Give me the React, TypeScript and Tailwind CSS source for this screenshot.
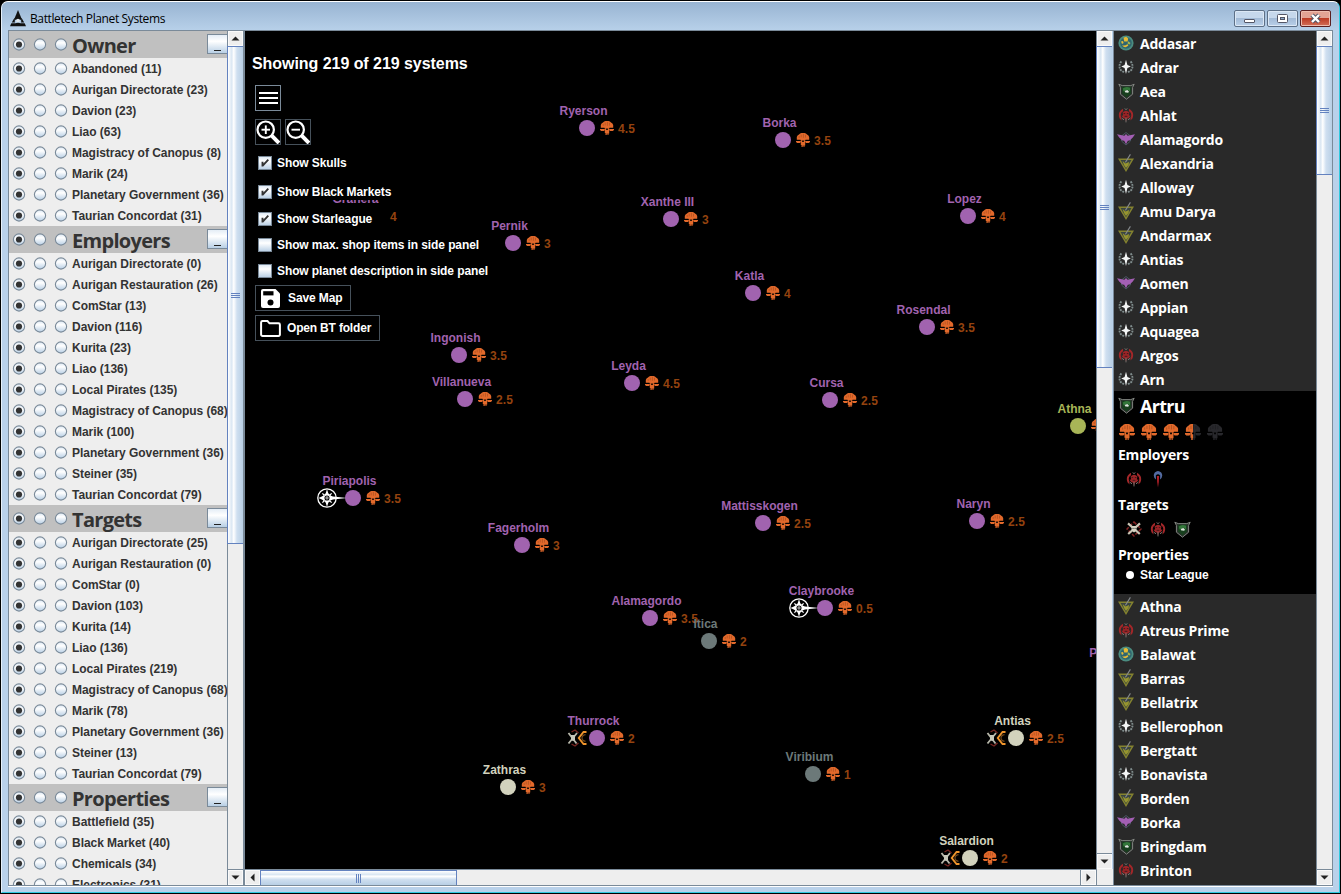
import React from "react";

type Faction = "abandoned" | "planetary" | "taurian" | "liao" | "canopus" | "restoration" | "marik" | "pirates";

type Entry = [string, number];

const owner: Entry[] = [
  ["Abandoned", 11], ["Aurigan Directorate", 23], ["Davion", 23], ["Liao", 63],
  ["Magistracy of Canopus", 8], ["Marik", 24], ["Planetary Government", 36], ["Taurian Concordat", 31],
];
const employers: Entry[] = [
  ["Aurigan Directorate", 0], ["Aurigan Restauration", 26], ["ComStar", 13], ["Davion", 116],
  ["Kurita", 23], ["Liao", 136], ["Local Pirates", 135], ["Magistracy of Canopus", 68],
  ["Marik", 100], ["Planetary Government", 36], ["Steiner", 35], ["Taurian Concordat", 79],
];
const targets: Entry[] = [
  ["Aurigan Directorate", 25], ["Aurigan Restauration", 0], ["ComStar", 0], ["Davion", 103],
  ["Kurita", 14], ["Liao", 136], ["Local Pirates", 219], ["Magistracy of Canopus", 68],
  ["Marik", 78], ["Planetary Government", 36], ["Steiner", 13], ["Taurian Concordat", 79],
];
const properties: Entry[] = [["Battlefield", 35], ["Black Market", 40], ["Chemicals", 34], ["Electronics", 31]];

const groups: { title: string; rows: Entry[] }[] = [
  { title: "Owner", rows: owner },
  { title: "Employers", rows: employers },
  { title: "Targets", rows: targets },
  { title: "Properties", rows: properties },
];

const before: [string, Faction][] = [
  ["Addasar", "abandoned"], ["Adrar", "planetary"], ["Aea", "taurian"], ["Ahlat", "liao"],
  ["Alamagordo", "canopus"], ["Alexandria", "restoration"], ["Alloway", "planetary"], ["Amu Darya", "restoration"],
  ["Andarmax", "restoration"], ["Antias", "planetary"], ["Aomen", "canopus"], ["Appian", "planetary"],
  ["Aquagea", "planetary"], ["Argos", "liao"], ["Arn", "planetary"],
];
const after: [string, Faction][] = [
  ["Athna", "restoration"], ["Atreus Prime", "liao"], ["Balawat", "abandoned"], ["Barras", "restoration"],
  ["Bellatrix", "restoration"], ["Bellerophon", "planetary"], ["Bergtatt", "restoration"], ["Bonavista", "planetary"],
  ["Borden", "restoration"], ["Borka", "canopus"], ["Bringdam", "taurian"], ["Brinton", "liao"],
];

interface System {
  name: string;
  x: number;
  y: number;
  skulls: string;
  color?: string;
  extra?: "star" | "market";
}

const PURPLE = "#a163af";
const GRAY = "#6c7979";
const CREAM = "#d2d2bd";

const systems: System[] = [
  { name: "Ryerson", x: 587, y: 128, skulls: "4.5" },
  { name: "Borka", x: 783, y: 140, skulls: "3.5" },
  { name: "Granera", x: 359, y: 216, skulls: "4" },
  { name: "Pernik", x: 513, y: 243, skulls: "3" },
  { name: "Xanthe III", x: 671, y: 219, skulls: "3" },
  { name: "Lopez", x: 968, y: 216, skulls: "4" },
  { name: "Katla", x: 753, y: 293, skulls: "4" },
  { name: "Rosendal", x: 927, y: 327, skulls: "3.5" },
  { name: "Ingonish", x: 459, y: 355, skulls: "3.5" },
  { name: "Villanueva", x: 465, y: 399, skulls: "2.5" },
  { name: "Leyda", x: 632, y: 383, skulls: "4.5" },
  { name: "Cursa", x: 830, y: 400, skulls: "2.5" },
  { name: "Athna", x: 1078, y: 426, skulls: "3", color: "#a8b557" },
  { name: "Piriapolis", x: 353, y: 498, skulls: "3.5", extra: "star" },
  { name: "Fagerholm", x: 522, y: 545, skulls: "3" },
  { name: "Mattisskogen", x: 763, y: 523, skulls: "2.5" },
  { name: "Naryn", x: 977, y: 521, skulls: "2.5" },
  { name: "Alamagordo", x: 650, y: 618, skulls: "3.5" },
  { name: "Claybrooke", x: 825, y: 608, skulls: "0.5", extra: "star" },
  { name: "Itica", x: 709, y: 641, skulls: "2", color: GRAY },
  { name: "Portland", x: 1117, y: 670, skulls: "2" },
  { name: "Thurrock", x: 597, y: 738, skulls: "2", extra: "market" },
  { name: "Antias", x: 1016, y: 738, skulls: "2.5", color: CREAM, extra: "market" },
  { name: "Zathras", x: 508, y: 787, skulls: "3", color: CREAM },
  { name: "Viribium", x: 813, y: 774, skulls: "1", color: GRAY },
  { name: "Salardion", x: 970, y: 858, skulls: "2", color: CREAM, extra: "market" },
];

function SkullShape() {
  return (
    <>
      <path d="M.8 6.8V4Q1.2 2.4 3 1.6Q4 0 5.5 0H8.5Q10 0 11 1.6Q12.8 2.4 13.2 4V6.8H9.6L9 7.4H5L4.4 6.8Z" />
      <path d="M0 7.9H4.8V9.2L3.8 10H1.2L0 9ZM9.2 7.9H14V9L12.8 10H10.2L9.2 9.2Z" />
      <path d="M4.8 7.2H6.2V9H7.8V7.2H9.2V12.4H8.5V13.9H7.5V12.4H6.7V14H5.5V12H4.8Z" />
      <path d="M5.2 1.6V4.4M7.4 .8V4.8M9.5 1.8V4.6M3.2 3V5" stroke="#000" strokeOpacity=".25" strokeWidth=".7" fill="none" />
    </>
  );
}

function Skull({ size = 14, level = 1 }: { size?: number; level?: number }) {
  return (
    <svg width={size} height={size} viewBox="0 0 14 14" className="block shrink-0">
      <g fill={level === 1 ? "#e2692b" : "#28282c"}>
        <SkullShape />
      </g>
      {level === 0.5 && (
        <svg width="7" height="14" viewBox="0 0 7 14">
          <g fill="#e2692b">
            <SkullShape />
          </g>
        </svg>
      )}
    </svg>
  );
}

function Emblem({ kind }: { kind: Faction | "steiner" }) {
  switch (kind) {
    case "abandoned":
      return (
        <svg width="16" height="16" viewBox="0 0 16 16" className="block">
          <circle cx="8" cy="8" r="7.6" fill="#4b8c80" />
          <circle cx="8" cy="8" r="5.8" fill="#2f6670" />
          <path d="M5.5 2.8 8.2 1.8 10.2 3.6 9.6 6.6 6.2 6.4ZM3 6.4 5 6 5.6 8 4 9ZM4 10.3C6 13 9 12.6 10.4 10L9.4 9.2Q7 11 4 10.3Z" fill="#e6bb35" />
          <path d="M10 6.3 12.6 8 11.4 9.6 9.6 8.4Z" fill="#a9b64a" />
        </svg>
      );
    case "planetary":
      return (
        <svg width="16" height="16" viewBox="0 0 16 16" className="block">
          <path d="M8 .8 9.4 6 12.8 7.5 9.4 9 8 15 6.6 9 3.2 7.5 6.6 6Z" fill="#f4f6f6" />
          <path d="M3.4 2.4Q-.2 7 3 11.4L6 13.2M12.6 2.4Q16.2 7 13 11.4L10 13.2" stroke="#7f8c8c" strokeWidth="1.9" strokeDasharray="1.9 .9" fill="none" />
        </svg>
      );
    case "taurian":
      return (
        <svg width="17" height="17" viewBox="0 0 17 17" className="block">
          <path d="M.8 1.2 4.2 2.6H12.8L16.2 1.2 14.6 4.4V11.2L8.5 16.2 2.4 11.2V4.4Z" fill="#2a312c" stroke="#8b8e8a" strokeWidth=".9" />
          <path d="M4 3.8H13V10.6L8.5 14.5 4 10.6Z" fill="#173f1d" />
          <path d="M4.8 5.6Q8 2.8 12 4.8V8.4L9.5 6.8 5.5 8.4Z" fill="#33773a" />
          <path d="M6.6 8 9.4 7 11.2 9 9.6 9.8 8.4 9.6 7.4 9.4Z" fill="#dce5dc" />
        </svg>
      );
    case "liao":
      return (
        <svg width="16" height="16" viewBox="0 0 16 16" className="block">
          <path d="M5 1.8Q-1 5 1.6 11.6L3.6 13.4 3 9.5Q2 6 5 4.2ZM11 1.8Q17 5 14.4 11.6L12.4 13.4 13 9.5Q14 6 11 4.2Z" fill="#a32729" />
          <path d="M4.6 5.4Q8 2.2 11.4 5.4L10.8 8.6 12.6 8.8 10.4 11.6H9L8 14.6 7 11.6H5.6L3.4 8.8 5.2 8.6Z" fill="#9c2427" />
          <path d="M6.8 1.4 8 2.8 9.2 1.4M8 10.8V15.4M3.6 11 6 12.9M12.4 11 10 12.9" stroke="#75726f" strokeWidth="1" fill="none" />
          <path d="M5.6 6.6H7.2M8.8 6.6H10.4M6.6 9.3H9.4" stroke="#37191a" strokeWidth=".9" />
        </svg>
      );
    case "canopus":
      return (
        <svg width="18" height="16" viewBox="0 0 18 16" className="block">
          <path d="M4.5 5 9 1.5 13.5 5V10L9 14 4.5 10Z" fill="none" stroke="#4a5663" strokeWidth="1" />
          <path d="M0 3.2 7.4 4.8 9 3 10.6 4.8 18 3.2 15.8 6.6 12.6 9.4 10.8 9.8 9 13.2 7.2 9.8 5.4 9.4 2.2 6.6Z" fill="#a35fb4" />
        </svg>
      );
    case "restoration":
      return (
        <svg width="16" height="18" viewBox="0 0 16 18" className="block">
          <path d="M1.2 5.2H14.8L8 16.6Z" fill="#3a4440" stroke="#85832f" strokeWidth="1.4" />
          <path d="M4.6 7 7.6 9.6 11 8 10.6 11 8 14 6 11Z" fill="#96952f" />
          <path d="M7.4 8.4 12.4 .4" stroke="#85898c" strokeWidth="1.1" />
        </svg>
      );
    case "steiner":
      return (
        <svg width="16" height="18" viewBox="0 0 16 18" className="block">
          <path d="M6 9.5Q2.2 6 4.8 2.6Q8 -.6 11.2 2.6Q13.8 6 10 9.5L10.2 5.6Q8 3 5.8 5.6Z" fill="#536ba1" />
          <path d="M6.9 6H9.1L8.8 12 8 17.4 7.2 12Z" fill="#b41f28" />
        </svg>
      );
    default:
      return (
        <svg width="16" height="16" viewBox="0 0 16 16" className="block">
          <path d="M8 1 15 8 8 15 1 8Z" fill="none" stroke="#842323" strokeWidth="1.5" strokeDasharray="3.4 1.4" />
          <path d="M2 2.4 13.8 13M14 2.4 2.2 13" stroke="#c9c4b4" strokeWidth="2.2" />
          <path d="M5.6 5H10.4V9.5L8 11.4 5.6 9.5Z" fill="#d7d3c3" />
          <path d="M6.6 7.4H7.5M8.6 7.4H9.5" stroke="#222" />
        </svg>
      );
  }
}

function Radio({ on = false }: { on?: boolean }) {
  return (
    <svg width="13" height="13" viewBox="0 0 13 13" className="block shrink-0 overflow-visible">
      <circle cx="7" cy="6.5" r="5.6" fill="url(#ball)" stroke="#7a8a99" strokeWidth="1.1" />
      {on && <circle cx="7" cy="6.5" r="3.1" fill="#333" />}
    </svg>
  );
}

function Radios() {
  return (
    <div className="flex gap-2">
      <Radio on />
      <Radio />
      <Radio />
    </div>
  );
}

function ArrowButton({ dir }: { dir: "up" | "down" | "left" | "right" }) {
  const paths = {
    up: "M3.5 9.5 7.5 5.5 11.5 9.5Z",
    down: "M3.5 5.5 7.5 9.5 11.5 5.5Z",
    left: "M9.5 3.5 5.5 7.5 9.5 11.5Z",
    right: "M5.5 3.5 9.5 7.5 5.5 11.5Z",
  };
  return (
    <div className="flex size-[15px] shrink-0 items-center justify-center border border-[#fafafa] bg-[#eee]">
      <svg width="15" height="15" viewBox="0 0 15 15" className="shrink-0">
        <path d={paths[dir]} fill="#222" />
      </svg>
    </div>
  );
}

function VBar({ thumb }: { thumb: string }) {
  return (
    <div className="flex w-4 shrink-0 flex-col border-l border-[#7a8a99] bg-[#eee]">
      <ArrowButton dir="up" />
      <div
        className={`-ml-px flex flex-col items-center justify-center gap-px border-y border-l border-[#6382bf] bg-[linear-gradient(90deg,#fff_0,#dbe7f3_25%,#fff_38%,#cfdff0_60%,#b8cfe5)] ${thumb}`}
      >
        <i className="block h-px w-[9px] bg-[#6382bf]" />
        <i className="block h-px w-[9px] bg-[#6382bf]" />
        <i className="block h-px w-[9px] bg-[#6382bf]" />
      </div>
      <div className="flex-1" />
      <div className="border-t border-[#7a8a99]">
        <ArrowButton dir="down" />
      </div>
    </div>
  );
}

function Group({ title, rows }: { title: string; rows: Entry[] }) {
  return (
    <section>
      <div className="flex h-[27px] items-center bg-[#c0c0c0] pl-[3px]">
        <div className="pb-px">
          <Radios />
        </div>
        <h2 className="ml-[5px] flex-1 pt-[3px] font-['Open_Sans',sans-serif] text-[20px] leading-[22px] font-bold tracking-[-0.7px]">{title}</h2>
        <button className="mb-[1px] flex h-5 w-5 items-end justify-center border border-r-0 border-[#7a8a99] bg-[linear-gradient(#e4edf6,#fff_35%,#b8cfe5)] pb-[2px]">
          <span className="block h-px w-[7px] bg-[#222]" />
        </button>
      </div>
      {rows.map(([name, count]) => (
        <div key={name} className="flex h-[21px] items-center pl-[3px]">
          <div className="pb-px">
            <Radios />
          </div>
          <span className="ml-[5px] pt-[2px] text-[12px] leading-[19px] font-bold tracking-[-0.04px] whitespace-nowrap">
            {name} ({count})
          </span>
        </div>
      ))}
    </section>
  );
}

function Node({ s }: { s: System }) {
  const color = s.color ?? PURPLE;
  return (
    <div className="absolute size-0" style={{ left: s.x - 245, top: s.y - 31 }}>
      <svg width="62" height="24" viewBox="-36 -12 62 24" className="absolute -top-3 -left-9">
        {s.extra === "star" && (
          <g>
            <circle cx="-26" cy="0" r="9.2" fill="none" stroke="#fff" strokeWidth="1.3" />
            <path d="M-26 -9 -24.2 -3 -20 -1.4 -6 0 -20 1.4 -24.2 3 -26 9 -27.8 3 -34.5 0 -27.8 -3Z" fill="#fff" />
            <circle cx="-26" cy="0" r="4" fill="none" stroke="#fff" strokeWidth="1.3" strokeDasharray="2.2 .94" />
            <path d="M-30.6 -4.6 -28.6 -2.6M-21.4 -4.6 -23.4 -2.6M-30.6 4.6 -28.6 2.6M-21.4 4.6 -23.4 2.6" stroke="#fff" strokeWidth="1.3" />
            <circle cx="-26" cy="0" r="2" fill="#fff" stroke="#000" strokeWidth="1.1" />
            <circle cx="-26" cy="0" r=".8" fill="#000" />
          </g>
        )}
        {s.extra === "market" && (
          <g>
            <path d="M-25.5 -6 -22 -8 -18.5 -5M-25.5 6 -22 8 -18.5 5" stroke="#762420" strokeWidth="1.4" fill="none" />
            <path d="M-28.5 -5 -20.5 5.5M-20 -5 -28.5 5.5" stroke="#b8b8ab" strokeWidth="1.8" />
            <path d="M-26 -3H-22V2L-24 3-26 2Z" fill="#c7c7ba" />
            <path d="M-10.5 -6H-13.5L-18.2 0-13.5 6H-10.5" fill="none" stroke="#ee942c" strokeWidth="1.9" />
            <path d="M-11.5 -3.3Q-15 -2.8-15 0T-11.5 3.3" fill="none" stroke="#754b1d" strokeWidth="1.2" />
          </g>
        )}
        <circle cx="0" cy="0" r="8" fill={color} />
      </svg>
      <div className="absolute top-[-7px] left-[13px]">
        <Skull />
      </div>
      <span className="absolute top-[-7px] left-[31px] text-[12px] leading-4 tracking-[0.1px] text-[#94430f]">
        {s.skulls}
      </span>
      <div className="absolute top-[-25px] left-[-64px] w-[121px] text-center text-[12px] leading-4 whitespace-nowrap" style={{ color }}>
        {s.name}
      </div>
    </div>
  );
}

function Check({ label, on = false, h }: { label: string; on?: boolean; h: string }) {
  return (
    <label className={`flex w-fit items-center gap-[5px] bg-black pl-1 text-[12px] font-bold tracking-[-0.1px] text-white ${h}`}>
      <svg width="14" height="14" viewBox="0 0 14 14" className="block">
        <rect x=".5" y=".5" width="13" height="13" fill="url(#ball)" stroke="#7a8a99" />
        {on && <path d="M4.5 5.8V10.5M5 9.3 10.3 3.7" stroke="#333" strokeWidth="1.9" fill="none" />}
      </svg>
      <span>{label}</span>
    </label>
  );
}

function ZoomIcon({ plus = false }: { plus?: boolean }) {
  return (
    <svg width="24" height="24" viewBox="0 0 24 24" className="block">
      <circle cx="9.7" cy="9.7" r="8.2" fill="none" stroke="#fff" strokeWidth="2.2" />
      <path d="M15.7 15.7 23 23" stroke="#fff" strokeWidth="4" />
      <path d="M5.5 9.7H14" stroke="#fff" strokeWidth="1.9" />
      {plus && <path d="M9.8 5.4V14" stroke="#fff" strokeWidth="1.9" />}
    </svg>
  );
}

function SideRow({ name, kind }: { name: string; kind: Faction }) {
  return (
    <li className="flex h-6 items-center pl-1">
      <span className="mr-[2px] flex w-4 items-center justify-center">
        <span className="-mx-1">
          <Emblem kind={kind} />
        </span>
      </span>
      <span className="pt-[2px] pl-1 leading-[22px]">{name}</span>
    </li>
  );
}

export default function App() {
  return (
    <div className="flex h-[894px] w-[1341px] flex-col overflow-hidden bg-black font-['Liberation_Sans',Arial,sans-serif] text-[#333]">
      <svg width="0" height="0" className="absolute">
        <linearGradient id="ball" x1="0" y1="0" x2="0" y2="1">
          <stop offset="0" stopColor="#dce8f4" />
          <stop offset=".35" stopColor="#fff" />
          <stop offset="1" stopColor="#b8cfe5" />
        </linearGradient>
      </svg>
      <div className="mt-px ml-px flex h-[892px] w-[1339px] flex-col rounded-t-[7px] border-t border-r border-b border-l border-t-white border-r-[#31c9df] border-b-[#31c9df] border-l-[#e6f0fa] bg-[#b9d1ea]">
        <header className="flex h-7 shrink-0 items-center rounded-t-[6px] bg-[linear-gradient(#98b4d2,#b7d0e9)] pr-2 pl-2">
          <svg width="16" height="18" viewBox="0 0 16 18" className="mt-[5px]">
            <path d="M8 0 11.3 8H4.7Z" fill="#111" />
            <path d="M3.5 9.5H5.2A2.9 2.9 0 0 0 5 12.5H1.8ZM12.5 9.5H10.8A2.9 2.9 0 0 1 11 12.5H14.2Z" fill="#111" />
            <path d="M4.5 8H11.5L12.6 9.8H3.4Z" fill="#111" />
            <circle cx="8" cy="10.6" r="1.9" fill="#dfe6ea" />
            <path d="M1.3 13.3H5.3L8 12.7 10.7 13.3H14.7L16 16.2H0Z" fill="#111" />
          </svg>
          <h1 className="mt-[5px] ml-[4px] flex-1 font-['Open_Sans',sans-serif] text-[12px] tracking-[-0.38px] text-black">Battletech Planet Systems</h1>
          <div className="mt-[5px] flex gap-[2px]">
            <span className="flex h-[17px] w-[31px] items-center justify-center rounded-[2px] border border-[#5d7087] bg-[linear-gradient(#c6d8ec_50%,#a3bbd7_50%,#b9d0e9)] shadow-[inset_0_0_0_1px_#dce8f5]">
              <i className="mt-1 block h-1 w-[11px] rounded-[1px] border border-[#535666] bg-white" />
            </span>
            <span className="flex h-[17px] w-[31px] items-center justify-center rounded-[2px] border border-[#5d7087] bg-[linear-gradient(#c6d8ec_50%,#a3bbd7_50%,#b9d0e9)] shadow-[inset_0_0_0_1px_#dce8f5]">
              <svg width="11" height="9" viewBox="0 0 11 9">
                <rect x=".5" y=".5" width="10" height="8" rx="1" fill="#fff" stroke="#535666" />
                <rect x="3.5" y="3.5" width="4" height="2" fill="#8faaca" stroke="#535666" />
              </svg>
            </span>
            <span className="flex h-[17px] w-[31px] items-center justify-center rounded-[2px] border border-[#5a1f20] bg-[linear-gradient(#e3a394_50%,#bd3c25_50%,#d2705a)] shadow-[inset_0_0_0_1px_#eebcae]">
              <svg width="13" height="11" viewBox="0 0 13 11">
                <path d="M3 2 10 9M10 2 3 9" stroke="#535666" strokeWidth="4.4" />
                <path d="M3 2 10 9M10 2 3 9" stroke="#fff" strokeWidth="2.4" />
              </svg>
            </span>
          </div>
        </header>

        <main className="mx-[6px] flex h-[856px] w-[1325px] shrink-0 border-t border-b border-l border-t-[#7a8a99] border-b-[#7a8a99] border-l-[#7a8a99] shadow-[0_1px_0_#fff]">
          <aside className="flex w-[236px] shrink-0 border-r-2 border-[#7a8a99]">
            <div className="w-[218px] shrink-0 overflow-hidden bg-[#eee]">
              {groups.map((g) => (
                <Group key={g.title} {...g} />
              ))}
            </div>
            <VBar thumb="h-[498px]" />
          </aside>

          <div className="flex w-[868px] shrink-0 flex-col">
            <div className="flex h-[838px]">
              <div className="relative w-[851px] shrink-0 overflow-hidden bg-black font-bold">
                {systems.map((s) => (
                  <Node key={s.name} s={s} />
                ))}
                <div className="relative flex w-fit flex-col items-start pt-[22px] pl-[7px] text-white">
                  <p className="h-[22px] bg-black text-[16px] leading-[22px] tracking-[-0.05px]">Showing 219 of 219 systems</p>
                  <div className="flex flex-col items-start pl-[3px]">
                    <button className="mt-[10px] flex size-[26px] flex-col items-center justify-center gap-[3px] border border-[#7a8a99] bg-black">
                      <i className="block h-[2px] w-[19px] bg-white" />
                      <i className="block h-[2px] w-[19px] bg-white" />
                      <i className="block h-[2px] w-[19px] bg-white" />
                    </button>
                    <div className="mt-2 flex gap-1">
                      <span className="size-[26px] border border-[#46515b]"><ZoomIcon plus /></span>
                      <span className="size-[26px] border border-[#46515b]"><ZoomIcon /></span>
                    </div>
                    <div className="mt-[4px] -ml-px flex flex-col">
                      <Check label="Show Skulls" on h="h-7 pr-1" />
                      <Check label="Show Black Markets" on h="h-[17px] mt-[6px] pr-1" />
                      <Check label="Show Starleague" on h="h-[26px] mt-[6px] pr-[14px]" />
                      <Check label="Show max. shop items in side panel" h="h-[26px] pr-1" />
                      <Check label="Show planet description in side panel" h="h-[26px] pr-1" />
                    </div>
                    <button className="mt-px flex h-[26px] items-center border border-[#46515b] bg-black px-[5px] text-[12px]">
                      <svg width="19" height="19" viewBox="0 0 19 19" className="mr-[8px]">
                        <path d="M2 0H14.5L19 4.5V17A2 2 0 0 1 17 19H2A2 2 0 0 1 0 17V2A2 2 0 0 1 2 0Z" fill="#fff" />
                        <path d="M2.2 2.2H12.5V6.4H2.2Z" fill="#000" />
                        <circle cx="9.5" cy="13.4" r="3" fill="#000" />
                      </svg>
                      <span className="pr-[2px] tracking-[-0.1px]">Save Map</span>
                    </button>
                    <button className="mt-1 flex h-[26px] items-center border border-[#46515b] bg-black pr-[8px] pl-1 text-[12px] tracking-[-0.18px]">
                      <svg width="21" height="17" viewBox="0 0 21 17" className="mr-[6px]">
                        <path d="M1.1 14V2.5A1.4 1.4 0 0 1 2.5 1.1H7.5L9.5 3.3H18.5A1.4 1.4 0 0 1 19.9 4.7V14.5A1.4 1.4 0 0 1 18.5 15.9H2.5A1.4 1.4 0 0 1 1.1 14.5Z" fill="none" stroke="#fff" strokeWidth="2" />
                      </svg>
                      Open BT folder
                    </button>
                  </div>
                </div>
              </div>
              <VBar thumb="h-[322px]" />
            </div>
            <div className="flex h-4 bg-[#eee]">
              <div className="flex w-[852px] border-t border-[#7a8a99]">
                <ArrowButton dir="left" />
                <div className="flex h-[15px] w-[197px] items-center justify-center gap-px border-x border-t border-[#6382bf] bg-[linear-gradient(#fff_0,#dbe7f3_25%,#fff_38%,#cfdff0_60%,#b8cfe5)]">
                  <i className="block h-[9px] w-px bg-[#6382bf]" />
                  <i className="block h-[9px] w-px bg-[#6382bf]" />
                  <i className="block h-[9px] w-px bg-[#6382bf]" />
                </div>
                <div className="flex-1" />
                <div className="border-x border-[#7a8a99]">
                  <ArrowButton dir="right" />
                </div>
              </div>
            </div>
          </div>

          <aside className="flex w-[220px] shrink-0 border-r border-l border-[#7a8a99]">
            <div className="w-[202px] shrink-0 overflow-hidden bg-[#292929] font-['Open_Sans',sans-serif] text-[14px] font-bold tracking-[-0.22px] text-white">
              <ul>
                {before.map(([name, kind]) => (
                  <SideRow key={name} name={name} kind={kind} />
                ))}
              </ul>
              <section className="h-[203px] bg-black pl-1">
                <div className="flex h-[30px] items-center">
                  <span className="mr-[5px] flex w-[17px] pb-px"><Emblem kind="taurian" /></span>
                  <h2 className="text-[18px] leading-[26px] tracking-[-0.7px]">Artru</h2>
                </div>
                <div className="flex gap-[6px] pt-[3px] pl-px">
                  <Skull size={16} />
                  <Skull size={16} />
                  <Skull size={16} />
                  <Skull size={16} level={0.5} />
                  <Skull size={16} level={0} />
                </div>
                <h3 className="mt-[4px] h-[22px] leading-[22px]">Employers</h3>
                <div className="flex h-7 items-center gap-2 pb-[2px] pl-2">
                  <Emblem kind="liao" />
                  <Emblem kind="steiner" />
                </div>
                <h3 className="h-[22px] leading-[22px]">Targets</h3>
                <div className="flex h-7 items-center gap-2 pb-[2px] pl-2">
                  <Emblem kind="pirates" />
                  <Emblem kind="liao" />
                  <Emblem kind="taurian" />
                </div>
                <h3 className="h-[22px] leading-[22px]">Properties</h3>
                <p className="flex items-center pl-2 font-['Liberation_Sans',Arial,sans-serif] text-[12px] leading-[18px] tracking-normal">
                  <i className="mr-[6px] block size-2 rounded-full bg-white" />
                  Star League
                </p>
              </section>
              <ul>
                {after.map(([name, kind]) => (
                  <SideRow key={name} name={name} kind={kind} />
                ))}
              </ul>
            </div>
            <VBar thumb="h-[129px]" />
          </aside>
        </main>
      </div>
    </div>
  );
}
